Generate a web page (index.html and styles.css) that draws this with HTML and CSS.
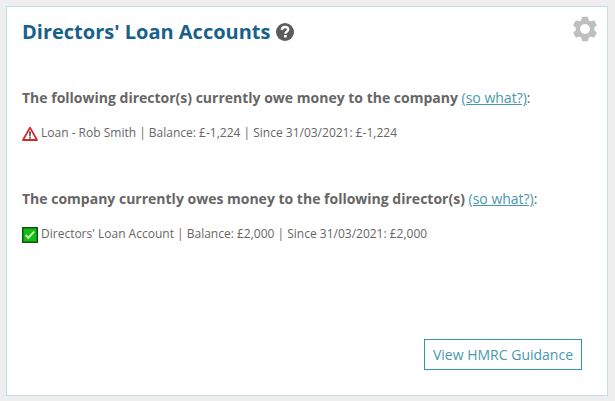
FILE: index.html
```html
<!DOCTYPE html>
<html lang="en">
<head>
  <meta charset="UTF-8">
  <meta name="viewport" content="width=device-width, initial-scale=1.0">
  <title>Directors' Loan Accounts</title>
  <link rel="stylesheet" href="styles.css">
</head>
<body>
  <div class="card">
    <div class="card-header">
      <h2>Directors' Loan Accounts</h2>
      <svg class="help-icon" viewBox="0 0 18 18">
        <circle cx="9" cy="9" r="9" fill="#5c5c5c"/>
        <path d="M5.8 6.8C6 4.8 7.3 4 9 4c1.8 0 3.2 1 3.2 2.6 0 2-2.8 2-2.8 4.2" fill="none" stroke="#fff" stroke-width="2.4"/>
        <rect x="8" y="12" width="2.7" height="2.5" fill="#fff"/>
      </svg>
      <svg class="gear-icon" viewBox="0 0 24 26">
        <path fill="#bfbfbf" stroke="#bfbfbf" stroke-width="1.4" stroke-linejoin="round" fill-rule="evenodd" d="M9.6 1.4h4.8l.6 3.3 2.6 1.5 3.2-1.1 2.3 4-2.5 2.3v3.2l2.5 2.3-2.3 4-3.2-1.1-2.6 1.5-.6 3.3H9.6L9 21.3l-2.6-1.5-3.2 1.1-2.3-4 2.5-2.3v-3.2L.9 9.1l2.3-4 3.2 1.1L9 4.7zM12 7.3a5.7 5.7 0 1 0 0 11.4 5.7 5.7 0 0 0 0-11.4z"/>
      </svg>
    </div>

    <h3>The following director(s) currently owe money to the company <a href="#">(so what?)</a><span>:</span></h3>
    <p class="account">
      <svg class="status-icon" viewBox="0 0 16 16">
        <path d="M8 1.6L15 14H1z" fill="#fff" stroke="#d42a2a" stroke-width="1.8" stroke-linejoin="round"/>
        <path d="M7 5.6h2l-.3 5H7.3z" fill="#555"/>
        <rect x="7.1" y="11.1" width="1.8" height="1.6" fill="#555"/>
      </svg>
      Loan - Rob Smith | Balance: £-1,224 | Since 31/03/2021: £-1,224
    </p>

    <h3>The company currently owes money to the following director(s) <a href="#">(so what?)</a><span>:</span></h3>
    <p class="account">
      <svg class="status-icon" viewBox="0 0 16 16">
        <rect x=".75" y=".75" width="14.5" height="14.5" fill="#14bd14" stroke="#155215" stroke-width="1.5"/>
        <path d="M3.7 8.2l2.6 2.7 5.9-6.4" fill="none" stroke="#d8ffd8" stroke-width="1.7"/>
      </svg>
      Directors' Loan Account | Balance: £2,000 | Since 31/03/2021: £2,000
    </p>

    <div class="card-footer">
      <a class="btn" href="#">View HMRC Guidance</a>
    </div>
  </div>
</body>
</html>
```

FILE: styles.css
```css
* {
  box-sizing: border-box;
}
body {
  margin: 0;
  padding: 6px 7px 5px 6px;
  height: 401px;
  background-color: #eeeeee;
  font-family: "Open Sans", sans-serif;
  color: #666666;
}
.card {
  display: flex;
  flex-direction: column;
  height: 390px;
  padding: 9px 10px 25px 15px;
  background-color: #fff;
  border: 1px solid #c6dde1;
}
.card-header {
  display: flex;
  align-items: center;
  height: 32px;
  margin-bottom: 40px;
}
h2 {
  margin: 0;
  font-size: 20px;
  font-weight: 700;
  line-height: 32px;
  color: #17618a;
}
.help-icon {
  width: 18px;
  height: 18px;
  margin-left: 6px;
}
.gear-icon {
  width: 24px;
  height: 26px;
  margin-left: auto;
  margin-top: -6px;
}
h3 {
  margin: 0 0 14px;
  font-size: 14px;
  font-weight: 700;
  line-height: 20px;
}
h3 a, h3 span {
  font-weight: 400;
}
h3 a {
  color: #4798ae;
}
.account {
  display: flex;
  align-items: center;
  gap: 3px;
  margin: 0 0 45px;
  font-size: 12px;
  line-height: 22px;
}
.status-icon {
  width: 16px;
  height: 16px;
  margin-top: 1px;
}
.card-footer {
  display: flex;
  justify-content: flex-end;
  margin-top: auto;
  padding-right: 15px;
}
.btn {
  width: 158px;
  height: 31px;
  border: 1px solid #3299a1;
  font-size: 14px;
  line-height: 30px;
  text-align: center;
  text-decoration: none;
  color: #4798ae;
}
```
